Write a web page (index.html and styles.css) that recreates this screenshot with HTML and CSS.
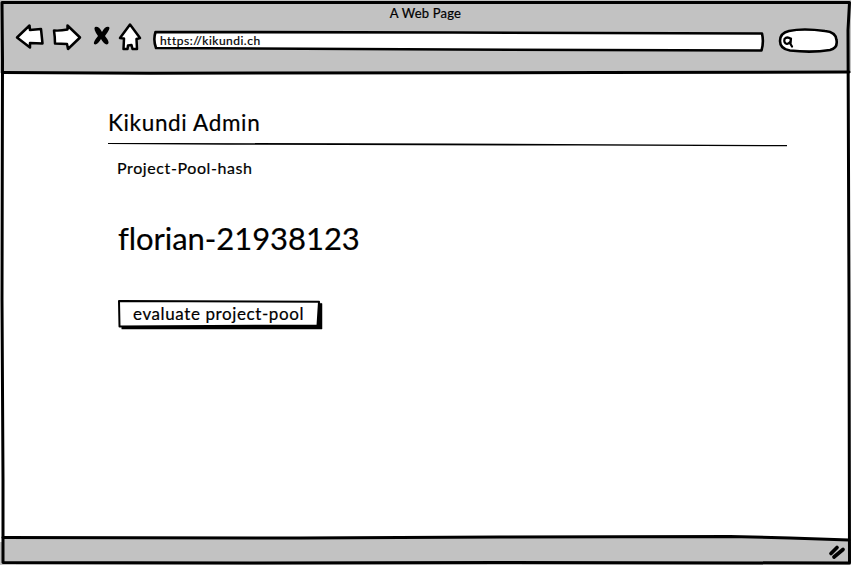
FILE: index.html
```
<!DOCTYPE html>
<html lang="en">
<head>
<meta charset="utf-8">
<title>Kikundi Admin</title>
<link rel="stylesheet" href="styles.css">
</head>
<body>
<div class="window">
  <header class="chrome">
    <div class="title">A Web Page</div>
    <div class="toolbar">
      <svg class="nav" width="132" height="36" viewBox="12 18 132 36">
        <g class="icon">
          <path d="M17 37.500L29.500 25.500L30 30L41 29L42.500 43.500L30 43L30 47.500Z"/>
          <path d="M54 30.500Q60 31 67.500 29.500L67.500 25.500L80 37.500L68 49L67 44L55 43.500Q55 37 54 30.500Z"/>
          <path d="M130 24.500L120 38L124 38.500L123.500 49L127.500 49L128 45.500L131.500 45L132.500 49L137 49L136.500 39L140 38Z"/>
        </g>
        <path class="cross" d="M95 27Q99 26 102 32Q105 26 109 27Q111 28 105 36Q110 42 108 44Q105 46 101 39Q97 46 94 44Q93 42 98 36Q93 29 95 27Z"/>
      </svg>
      <div class="address">
        <svg class="outline" viewBox="0 0 612 22"><path d="M2.500 2Q160 2 300 2.500T609 3.500Q611 12 608.500 20.500Q450 20 300 19.500T3 18Q0 10 2.500 2Z"/></svg>
        <span class="url">https://kikundi.ch</span>
      </div>
      <svg class="search" width="62" height="26" viewBox="777 28 62 26">
        <path class="pill" d="M789 31Q803 28 825 31Q836 32 836.500 40Q838 48 830 50Q812 53 790 50.500Q780 49 780 41Q780 33 789 31Z"/>
        <path class="lens" d="M791 39Q787 36 784.500 39Q783.500 43 787 44Q791 43 791 38.500L790.500 44L792 46.500"/>
      </svg>
    </div>
  </header>
  <main class="page">
    <h1 class="heading">Kikundi Admin</h1>
    <svg class="rule" width="680" height="5" viewBox="0 0 680 5"><path d="M0 1L60 1L340 1.400L679 3L679 4.200L470 3.600L120 2.800L0 2Z"/></svg>
    <div class="label">Project-Pool-hash</div>
    <div class="hash">florian-21938123</div>
    <button class="button" type="button"><svg class="button-edge" viewBox="0 0 205 30"><path class="shadow" d="M4 25L199 25L200 3L204 3.500L204 29L4 29Z"/><path class="face" d="M1 1L201 1.700L199.500 25.500L1.500 26.500Z"/></svg><span class="button-text">evaluate project-pool</span></button>
  </main>
  <footer class="status">
    <svg class="grip" width="20" height="18" viewBox="827 543 20 18"><path d="M831 553.500L837 547.500M834 557L843 549.500"/></svg>
  </footer>
  <svg class="frame" viewBox="0 0 851 565">
    <path class="chrome-fill" d="M3 538.500L300 537.500L730 537L849 540V562H3Z"/>
    <path d="M2 2.500H849.500L848 30L849 300L849.500 563L500 562.500L250 563L3 562.500L3 480L2 300L2.500 60Z"/>
    <path d="M3 72.500L150 73.300L600 72.500L849 72"/>
    <path d="M3 537.500L300 538L500 537L730 536.500L790 538L849 540"/>
  </svg>
</div>
</body>
</html>
```
FILE: styles.css
```
* { box-sizing: border-box; }
body { margin: 0; background: #fff; color: #000; font-family: Lato, "Open Sans", sans-serif; font-variant-ligatures: none; -webkit-text-stroke: 0.2px #000; overflow: hidden; white-space: nowrap; }
svg { display: block; }
path { stroke-linejoin: round; stroke-linecap: round; }
.window { position: relative; width: 851px; height: 565px; display: flex; flex-direction: column; }
.chrome { height: 73px; background: #c2c2c2; display: flex; flex-direction: column; }
.title { height: 26px; padding-top: 5px; text-align: center; font-size: 13px; line-height: 17px; letter-spacing: 0.2px; }
.toolbar { display: flex; padding-left: 12px; }
.nav { margin-top: -8px; }
.icon path { fill: #fff; stroke: #000; stroke-width: 2.5; }
.cross { fill: #000; }
.address { position: relative; width: 612px; height: 22px; margin: 4px 0 0 9px; padding-left: 7px; }
.outline, .button-edge, .frame { position: absolute; inset: 0; width: 100%; height: 100%; }
.outline path, .pill { fill: #fff; stroke: #000; stroke-width: 2.6; }
.url { position: relative; display: block; font-size: 12px; line-height: 21px; letter-spacing: 0.5px; }
.search { margin: 2px 0 0 12px; }
.lens { fill: none; stroke: #000; stroke-width: 2.2; }
.page { flex: 1; padding: 36px 0 0 108px; display: flex; flex-direction: column; align-items: flex-start; }
.heading { margin: 0; height: 33px; font-size: 22.5px; font-weight: 400; line-height: 28px; letter-spacing: 0.65px; }
.label { margin: 11px 0 0 9px; height: 20px; font-size: 16px; line-height: 20px; letter-spacing: 0.6px; }
.hash { margin: 40px 0 0 10px; height: 40px; font-size: 31px; line-height: 40px; letter-spacing: -0.05px; }
.button { position: relative; margin: 42px 0 0 10px; width: 205px; height: 30px; padding: 0 0 2px 15px; border: 0; background: none; color: #000; font: 17px/26px Lato, sans-serif; letter-spacing: 0.6px; font-variant-ligatures: none; text-align: left; }
.button-text { position: relative; display: block; }
.face { fill: #fff; stroke: #000; stroke-width: 2; }
.shadow { fill: #000; stroke: #000; stroke-width: 0.5; }
.status { height: 27px; background: linear-gradient(transparent 4px, #c2c2c2 4px); display: flex; justify-content: flex-end; }
.grip { position: relative; z-index: 1; margin: 5px 4px 0 0; }
.grip path { fill: none; stroke: #000; stroke-width: 3.7; }
.frame { pointer-events: none; }
.frame path { fill: none; stroke: #000; stroke-width: 3; }
.frame .chrome-fill { fill: #c2c2c2; stroke: none; }
```
